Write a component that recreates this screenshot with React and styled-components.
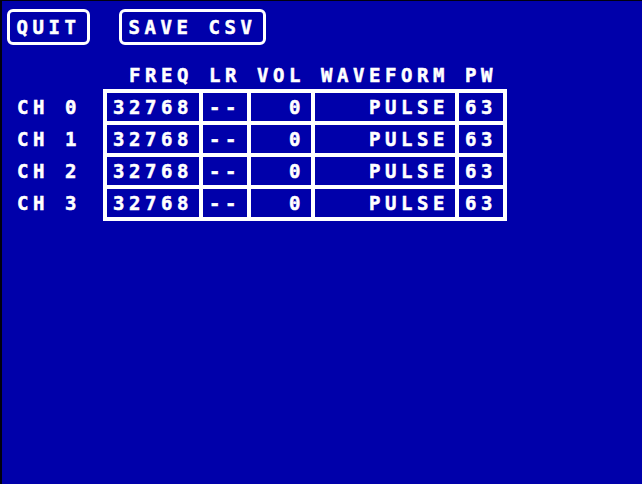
import React from "react";
import styled, { createGlobalStyle } from "styled-components";

const GlobalStyle = createGlobalStyle`
  html, body {
    margin: 0;
    padding: 0;
    background: #0000aa;
  }
  body {
    font-family: "DejaVu Sans Mono", "Liberation Mono", monospace;
  }
`;

const Screen = styled.div`
  width: 642px;
  height: 484px;
  box-sizing: border-box;
  background: #0000aa;
  box-shadow: inset 2px 1px 0 #000010;
  color: #ffffff;
  font-family: "DejaVu Sans Mono", "Liberation Mono", monospace;
  font-weight: bold;
  font-size: 19px;
  line-height: 16px;
  letter-spacing: 4.56px;
  -webkit-text-stroke: 0.5px #ffffff;
  display: flex;
  flex-direction: column;
`;

const Toolbar = styled.div`
  display: flex;
  gap: 29px;
  padding: 9px 0 0 7px;
`;

const Button = styled.button`
  font: inherit;
  letter-spacing: inherit;
  -webkit-text-stroke: inherit;
  color: #ffffff;
  background: transparent;
  border: 3px solid #ffffff;
  border-radius: 6px;
  padding: 7px 6.5px;
  margin: 0;
  cursor: pointer;
  white-space: pre;
`;

const Monitor = styled.div`
  display: grid;
  grid-template-columns: 103px auto;
  grid-template-rows: 16px auto;
  row-gap: 6px;
  margin-top: 22px;
  justify-content: start;
`;

const Labels = styled.div`
  display: flex;
  flex-direction: column;
  gap: 4px;
  padding: 4px 0 0 17px;
`;

const Label = styled.div`
  height: 28px;
  display: flex;
  align-items: center;
  white-space: pre;
`;

const COLS = "92px 44px 60px 140px 44px";

const HeaderRow = styled.div`
  display: grid;
  grid-template-columns: ${COLS};
  column-gap: 4px;
  padding: 0 4px;
`;

const Header = styled.div`
  padding: 0 6px;
  text-align: right;
  white-space: pre;
`;

const Table = styled.div`
  display: grid;
  grid-template-columns: ${COLS};
  gap: 4px;
  padding: 4px;
  background: #ffffff;
`;

const Cell = styled.div`
  height: 28px;
  padding: 0 6px;
  background: #0000aa;
  display: flex;
  align-items: center;
  justify-content: ${(p) => (p.$left ? "flex-start" : "flex-end")};
  white-space: pre;
`;

const headers = ["FREQ", "LR", "VOL", "WAVEFORM", "PW"];
const channels = [0, 1, 2, 3].map((n) => ({
  name: `CH ${n}`,
  freq: "32768",
  lr: "--",
  vol: "0",
  wave: "PULSE",
  pw: "63",
}));

export default function App() {
  return (
    <>
      <GlobalStyle />
      <Screen>
        <Toolbar>
          <Button>QUIT</Button>
          <Button>SAVE CSV</Button>
        </Toolbar>
        <Monitor>
          <div />
          <HeaderRow>
            {headers.map((h) => (
              <Header key={h}>{h}</Header>
            ))}
          </HeaderRow>
          <Labels>
            {channels.map((c) => (
              <Label key={c.name}>{c.name}</Label>
            ))}
          </Labels>
          <Table>
            {channels.map((c) => (
              <React.Fragment key={c.name}>
                <Cell>{c.freq}</Cell>
                <Cell $left>{c.lr}</Cell>
                <Cell>{c.vol}</Cell>
                <Cell>{c.wave}</Cell>
                <Cell>{c.pw}</Cell>
              </React.Fragment>
            ))}
          </Table>
        </Monitor>
      </Screen>
    </>
  );
}
